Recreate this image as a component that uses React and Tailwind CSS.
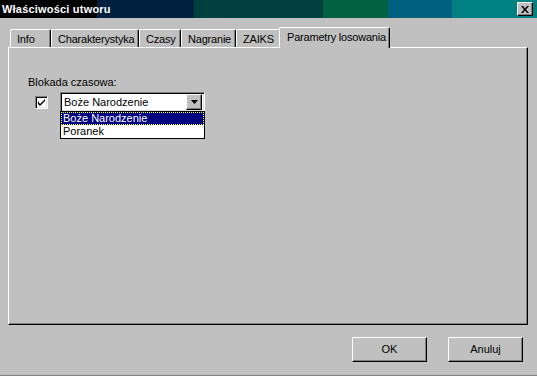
import React from 'react';

const font = { fontFamily: '"Liberation Sans", Arial, sans-serif' };

const tabs = [
  { label: 'Info', w: 'w-[41px]' },
  { label: 'Charakterystyka', w: 'w-[88px]' },
  { label: 'Czasy', w: 'w-[42px]' },
  { label: 'Nagranie', w: 'w-[55px]' },
  { label: 'ZAIKS', w: 'w-[45px]' },
];

const Raised = ({ className = '', children }) => (
  <div
    className={`border-t border-l border-t-white border-l-white border-r border-b border-r-black border-b-black shadow-[inset_-1px_-1px_#808080] bg-[#c0c0c0] ${className}`}
  >
    {children}
  </div>
);

const Sunken = ({ className = '', children }) => (
  <div
    className={`border-t border-l border-t-[#808080] border-l-[#808080] border-r border-b border-r-white border-b-white shadow-[inset_1px_1px_#000,inset_-1px_-1px_#dfdfdf] ${className}`}
  >
    {children}
  </div>
);

const App = () => {
  return (
    <div
      className="w-[537px] h-[376px] bg-[#c0c0c0] flex flex-col text-[11px] leading-[13px] text-black border-b border-b-[#808080] overflow-hidden"
      style={font}
    >
      {/* Title bar */}
      <div className="h-[18px] shrink-0 flex items-center justify-between pl-[2px] pr-[4px] bg-[linear-gradient(to_right,#000_0_97px,#002040_97px_194px,#004040_194px_323px,#006040_323px_388px,#006080_388px_452px,#008080_452px_100%)]">
        <span className="font-bold text-white text-[11px] tracking-[0.2px]">Właściwości utworu</span>
        <Raised className="w-[16px] h-[14px] flex items-center justify-center">
          <svg width="8" height="7" viewBox="0 0 8 7">
            <path d="M0 0h2l2 2.5L6 0h2L5 3.5 8 7H6L4 4.5 2 7H0l3-3.5z" fill="#000" />
          </svg>
        </Raised>
      </div>

      {/* Tabs */}
      <div className="flex items-end pl-[10px] mt-[9px] h-[20px] relative z-10 tracking-[-0.2px]">
        {tabs.map((t) => (
          <div
            key={t.label}
            className={`${t.w} h-[18px] border-t border-l border-t-white border-l-white border-r border-r-black shadow-[inset_-1px_0_#808080] rounded-tl-[2px] rounded-tr-[2px] pl-[6px] pt-[3px] whitespace-nowrap`}
          >
            {t.label}
          </div>
        ))}
        <div className="w-[111px] h-[21px] -ml-[2px] -mb-px bg-[#c0c0c0] border-t border-l border-t-white border-l-white border-r border-r-black shadow-[inset_-1px_0_#808080] rounded-tl-[2px] rounded-tr-[2px] pl-[7px] pt-[3px] whitespace-nowrap">
          Parametry losowania
        </div>
      </div>

      {/* Panel */}
      <div className="ml-[8px] w-[520px] h-[278px] border-t border-l border-t-white border-l-white border-r border-b border-r-black border-b-black shadow-[inset_-1px_-1px_#808080] pl-[19px] pt-[28px]">
        <div>Blokada czasowa:</div>
        <div className="flex items-center mt-[3px] ml-[7px] gap-[12px]">
          <Sunken className="w-[13px] h-[13px] bg-white flex items-center justify-center">
            <svg width="7" height="7" viewBox="0 0 7 7">
              <path d="M0 2v3l2 2 5-5V0L2 5z" fill="#000" />
            </svg>
          </Sunken>
          <div className="relative">
            <Sunken className="w-[145px] h-[20px] bg-white flex items-center justify-between pl-[3px] pr-[2px]">
              <span>Boże Narodzenie</span>
              <Raised className="w-[16px] h-[16px] flex items-center justify-center">
                <svg width="7" height="4" viewBox="0 0 7 4">
                  <path d="M0 0h7L3.5 4z" fill="#000" />
                </svg>
              </Raised>
            </Sunken>
            <div className="absolute left-0 top-[19px] w-[145px] border border-black bg-white">
              <div className="h-[13px] bg-[#000080] text-white pl-[2px] outline-1 outline-dotted outline-[#ffff00] -outline-offset-1">
                Boże Narodzenie
              </div>
              <div className="h-[13px] pl-[2px]">Poranek</div>
            </div>
          </div>
        </div>
      </div>

      {/* Buttons */}
      <div className="flex justify-end gap-[21px] pr-[14px] mt-[12px]">
        <Raised className="w-[75px] h-[25px] flex items-center justify-center">OK</Raised>
        <Raised className="w-[75px] h-[25px] flex items-center justify-center">Anuluj</Raised>
      </div>
    </div>
  );
};

export default App;
